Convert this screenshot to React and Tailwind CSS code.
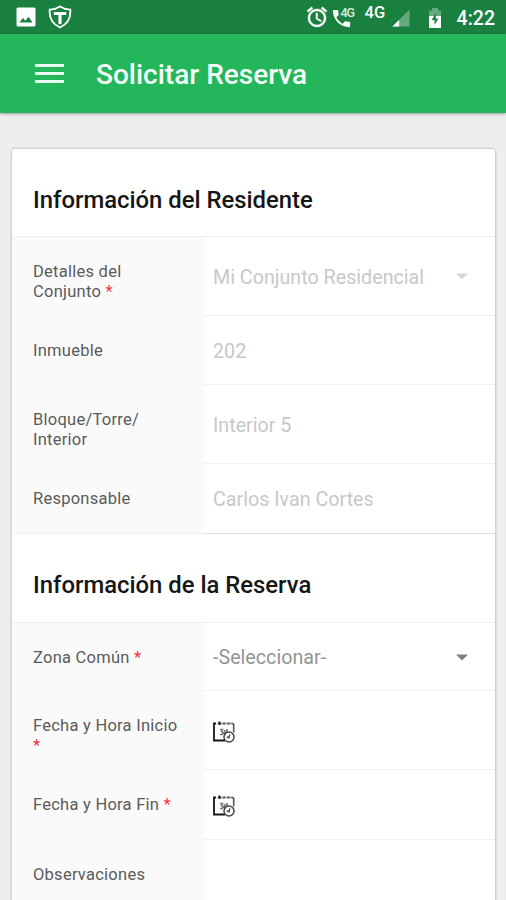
import { clsx } from 'clsx';

const resident = [
  { label: 'Detalles del Conjunto', required: true, value: 'Mi Conjunto Residencial', type: 'select', disabled: true, height: 'h-[79px]' },
  { label: 'Inmueble', value: '202', disabled: true, height: 'h-[69px]' },
  { label: 'Bloque/Torre/ Interior', value: 'Interior 5', disabled: true, height: 'h-[79px]' },
  { label: 'Responsable', value: 'Carlos Ivan Cortes', disabled: true, height: 'h-[70px]' },
];

const booking = [
  { label: 'Zona Común', required: true, value: '-Seleccionar-', type: 'select', height: 'h-[68px]' },
  { label: 'Fecha y Hora Inicio', required: true, type: 'date', height: 'h-[79px]' },
  { label: 'Fecha y Hora Fin', required: true, type: 'date', height: 'h-[70px]' },
  { label: 'Observaciones', height: 'h-[69px]' },
];

function CalendarIcon() {
  return (
    <svg className="block" width="22" height="22" viewBox="0 0 22 22" fill="none">
      <path d="M3 2.500H1V19.500H12" stroke="#161616" strokeWidth="1.800" />
      <path d="M4.500 2.500H20" stroke="#888" strokeWidth="1.400" />
      <path d="M20.700 2.500V11.500" stroke="#555" strokeWidth="1.600" />
      <path d="M6.500 0.500V4" stroke="#111" strokeWidth="2" />
      <path d="M11 1V4M15.500 1V4M19.500 1.500V4" stroke="#777" strokeWidth="1.600" />
      <path d="M7 8.500H9.500L8.500 10.500L10.500 11.500L9 13.500H7M11.500 9L13 13.500M14 8V12M10.500 12.500H15" stroke="#777" strokeWidth="1.600" />
      <circle cx="16" cy="16" r="5" fill="#fff" stroke="#444" strokeWidth="1.500" />
      <path d="M17 13.500L15.700 17.500M15.700 16.500L13.800 16" stroke="#444" strokeWidth="1.300" />
    </svg>
  );
}

function StatusBar() {
  return (
    <div className="flex h-[34px] items-center justify-between bg-[#1a8040] pl-4 pr-[11px] text-white">
      <div className="flex items-center gap-[12px]">
        <svg width="20" height="20" viewBox="0 0 20 20">
          <path fillRule="evenodd" fill="#fff" d="M2 0.500H18Q19.500 0.500 19.500 2V18Q19.500 19.500 18 19.500H2Q0.500 19.500 0.500 18V2Q0.500 0.500 2 0.500ZM3.500 15.500H16.500L12.500 9.800L9.300 13.700L7 11Z" />
        </svg>
        <svg width="24" height="24" viewBox="0 0 24 24" fill="none">
          <path d="M12 1.500Q16.500 4.500 22.300 4.700Q23.300 17 12 22.500Q0.700 17 1.700 4.700Q7.500 4.500 12 1.500Z" stroke="#fff" strokeWidth="1.800" />
          <path d="M5.800 7H18.200V10H13.600V18.500L12 19.500L10.400 18.500V10H5.800Z" fill="#fff" />
        </svg>
      </div>
      <div className="flex items-center">
        <svg width="24" height="24" viewBox="0 0 24 24" fill="#fff" stroke="#fff" strokeWidth="0.400">
          <path d="M22 5.720l-4.600-3.860-1.290 1.530 4.600 3.860L22 5.720zM7.880 3.390L6.600 1.860 2 5.710l1.290 1.530 4.590-3.850zM12.500 8H11v6l4.750 2.850.75-1.230-4-2.370V8zM12 4c-4.970 0-9 4.030-9 9s4.020 9 9 9c4.970 0 9-4.030 9-9s-4.030-9-9-9zm0 16c-3.870 0-7-3.130-7-7s3.130-7 7-7 7 3.130 7 7-3.130 7-7 7z" />
        </svg>
        <div className="relative ml-px h-[22px] w-[24px]">
          <svg className="mt-[1px]" width="23" height="23" viewBox="0 0 24 24" fill="#fff">
            <path d="M20 15.500c-1.250 0-2.450-.2-3.570-.57-.35-.11-.74-.03-1.020.24l-2.200 2.200c-2.830-1.440-5.150-3.750-6.590-6.590l2.200-2.210c.28-.26.36-.65.25-1C8.700 6.450 8.500 5.250 8.500 4c0-.55-.45-1-1-1H4c-.55 0-1 .45-1 1 0 9.390 7.610 17 17 17 .55 0 1-.45 1-1v-3.500c0-.55-.45-1-1-1z" />
          </svg>
          <span className="absolute left-[10px] top-0 text-[12.500px] leading-[14px] font-medium tracking-[-1px] text-[#d9ecdf]">4G</span>
        </div>
        <span className="ml-[10px] mb-[8px] text-[16.500px] leading-[16px] font-medium tracking-[0.300px]">4G</span>
        <svg className="ml-[6px] mt-[2px]" width="18" height="18" viewBox="0 0 19 19">
          <path d="M18.500 0.500V18.500H0.500Z" fill="#65a97e" />
          <path d="M7.500 11.500V18.500H0.500Z" fill="#fff" />
        </svg>
        <svg className="ml-[18px] mt-[2px]" width="14" height="22" viewBox="0 0 14 22">
          <path d="M1 3.500H4V1H10V3.500H13V9H1Z" fill="#65a97e" />
          <path d="M1 9H13V21H1Z" fill="#fff" />
          <path d="M7.800 6L3.700 13H6.500V18L10.400 11.500H7.800Z" fill="#1a8040" />
        </svg>
        <span className="ml-[15px] mt-[3px] text-[19.500px] leading-[24px] font-medium">4:22</span>
      </div>
    </div>
  );
}

function Field({ field, last }) {
  return (
    <div className={clsx('flex', field.height)}>
      <div className={clsx('w-[192px] shrink-0 bg-[#fafafa] pl-[21px] pt-[25px]', last && 'border-b border-[#f0f0f0]')}>
        <p className="w-[150px] text-[16.500px] leading-[20px] tracking-[0.250px] text-[#5a5a5a]">
          {field.label}{' '}
          {field.required && <span className="inline-block leading-[18px] text-[#f3323d]">*</span>}
        </p>
      </div>
      <div className={clsx('flex flex-1 items-center justify-between border-b pl-[9px] pr-[27px] pt-[3px]', last ? 'border-[#dedede]' : 'border-[#efefef]')}>
        {field.type === 'date' ? (
          <CalendarIcon />
        ) : (
          <span className={clsx('text-[19.700px] leading-6', field.disabled ? 'text-[#c8c8c8]' : 'text-[#949494]')}>{field.value}</span>
        )}
        {field.type === 'select' && (
          <svg className="mb-[2px]" width="12" height="7" viewBox="0 0 12 7">
            <path d="M0 0.500H12L6 6.500Z" fill={field.disabled ? '#d8d8d8' : '#808080'} />
          </svg>
        )}
      </div>
    </div>
  );
}

function Section({ title, fields, height, closed }) {
  return (
    <section>
      <h2 className={clsx('flex items-center border-b border-[#f0f0f0] pl-[21px] pt-[16px] text-[23.850px] font-medium text-[#161616]', height)}>{title}</h2>
      {fields.map((field, i) => (
        <Field key={field.label} field={field} last={closed && i === fields.length - 1} />
      ))}
    </section>
  );
}

export default function App() {
  return (
    <div className="h-[900px] w-[506px] overflow-hidden bg-[#eeeeee] font-['Roboto',sans-serif]">
      <StatusBar />
      <header className="flex h-[79px] items-center bg-[#23b65b] pl-[35px] shadow-[0_1px_3px_rgba(0,0,0,0.35)]">
        <div className="flex w-[29px] flex-col gap-[5px]">
          <div className="h-[3px] bg-[#e8fff0]" />
          <div className="h-[3px] bg-[#e8fff0]" />
          <div className="h-[3px] bg-[#e8fff0]" />
        </div>
        <h1 className="ml-8 mt-[3px] text-[28px] font-medium text-[#f4fff8]">Solicitar Reserva</h1>
      </header>
      <main className="mx-[12px] mt-[36px] w-[483px] overflow-hidden rounded-t-[3px] bg-white shadow-[0_0_3px_rgba(0,0,0,0.35)]">
        <Section title="Información del Residente" fields={resident} height="h-[88px]" closed />
        <Section title="Información de la Reserva" fields={booking} height="h-[89px]" />
      </main>
    </div>
  );
}
